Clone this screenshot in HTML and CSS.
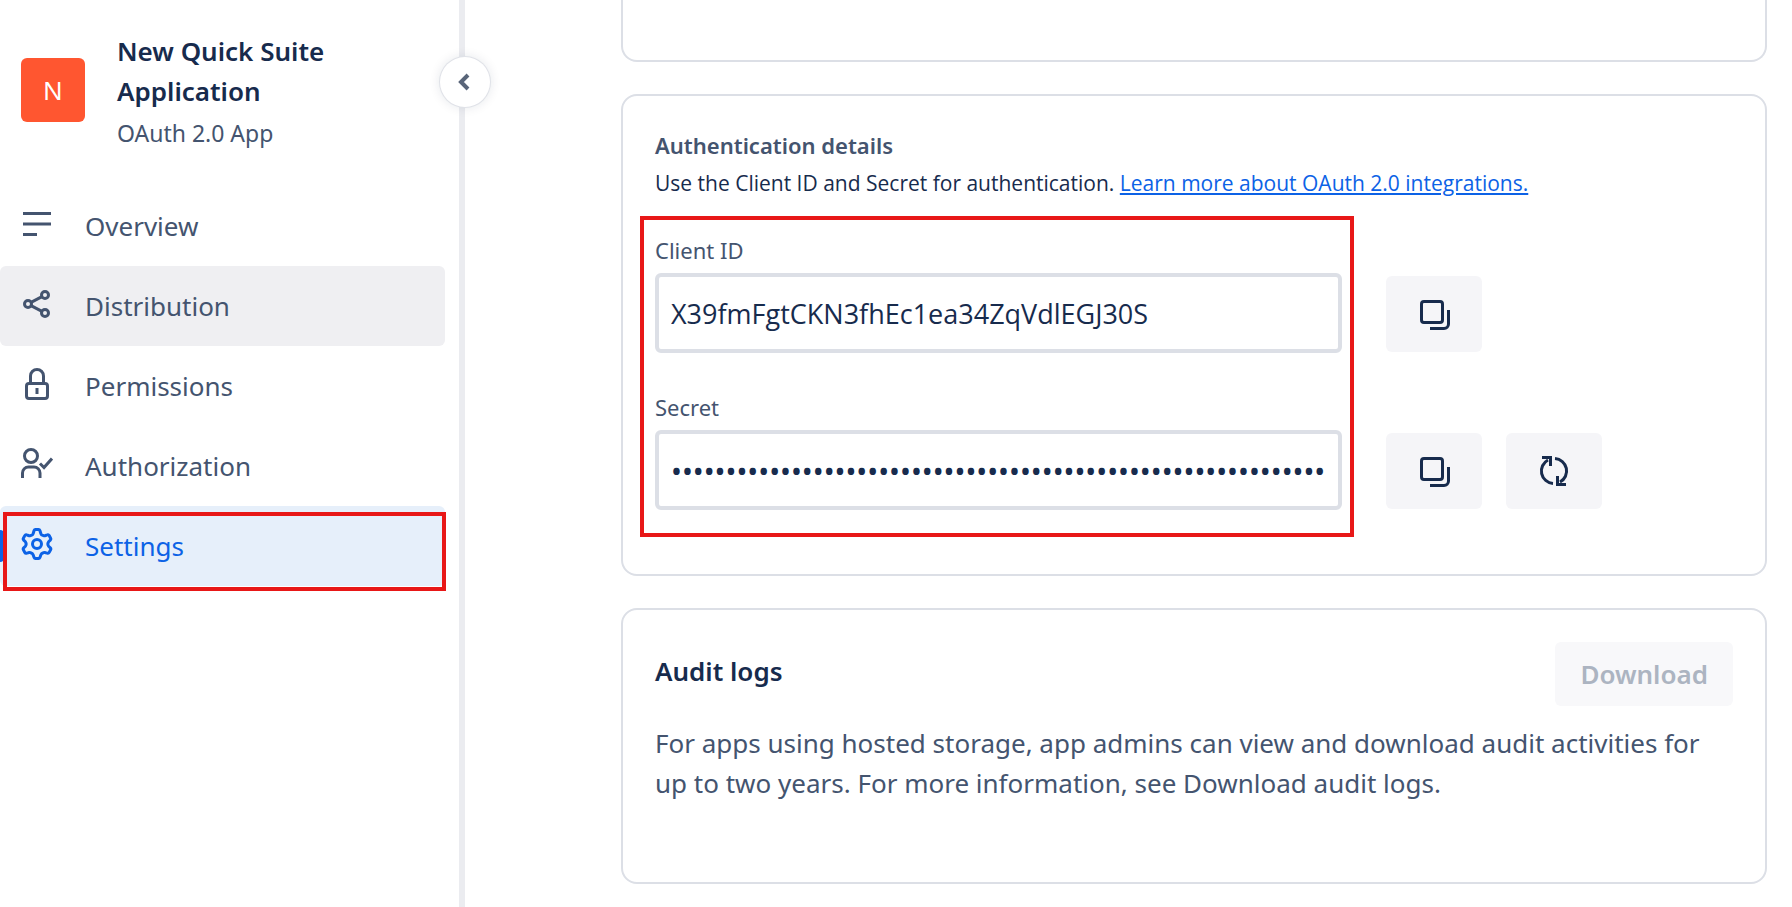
FILE: index.html
```html
<!DOCTYPE html>
<html lang="en">
<head>
    <meta charset="UTF-8">
    <meta name="viewport" content="width=device-width, initial-scale=1.0">
    <title>Settings - New Quick Suite Application</title>
    <link rel="stylesheet" href="styles.css">
</head>
<body>
    <aside class="sidebar">
        <div class="app-header">
            <div class="app-avatar">N</div>
            <div>
                <h1 class="app-name">New Quick Suite Application</h1>
                <p class="app-type">OAuth 2.0 App</p>
            </div>
        </div>

        <nav class="nav">
            <a href="#overview" class="nav-item">
                <svg class="nav-icon" viewBox="0 0 32 32"><path d="M2 5.500h28M2 16h28M2 26.500h14"/></svg>
                Overview
            </a>
            <a href="#distribution" class="nav-item hovered">
                <svg class="nav-icon" viewBox="0 0 32 32"><circle cx="7" cy="16" r="3.500"/><circle cx="24" cy="7" r="3.500"/><circle cx="24" cy="25" r="3.500"/><path d="M10 14.400l11-5.800M10 17.600l11 5.800"/></svg>
                Distribution
            </a>
            <a href="#permissions" class="nav-item">
                <svg class="nav-icon" viewBox="0 0 32 32"><rect x="5.500" y="15.500" width="21" height="15" rx="2.500"/><path d="M9.500 15V8a6.500 6.500 0 0 1 13 0v7M16 20v6"/></svg>
                Permissions
            </a>
            <a href="#authorization" class="nav-item">
                <svg class="nav-icon" viewBox="0 0 32 32"><circle cx="10" cy="8" r="6.500"/><path d="M1.500 30v-5a6 6 0 0 1 6-6h5.500a6 6 0 0 1 6 6v5M19 15.500l4 4 8-9"/></svg>
                Authorization
            </a>
            <a href="#settings" class="nav-item selected">
                <svg class="nav-icon" viewBox="0 0 32 32"><path stroke-linejoin="round" d="M14.500 1.500h3a1.500 1.500 0 0 1 1.400 1l1 3.200q.5 1.300 1.900 1.700l.8.300q1 .4 2-.2l1.600-.6a1.600 1.600 0 0 1 2 .7l1.400 2.600a1.600 1.600 0 0 1-.3 1.900l-1.700 1.700q-1.500 2.200 0 4.400l1.700 1.700a1.600 1.600 0 0 1 .3 1.900l-1.400 2.600a1.600 1.600 0 0 1-2 .7l-1.600-.4q-1-.4-2 0l-.8.300q-1.400.4-1.900 1.700l-1 2.800a1.500 1.500 0 0 1-1.400 1h-3a1.500 1.500 0 0 1-1.400-1l-1-2.800q-.5-1.300-1.900-1.700l-.8-.3q-1-.4-2 0l-1.600.4a1.600 1.600 0 0 1-2-.7l-1.400-2.600a1.600 1.600 0 0 1 .3-1.900l1.700-1.700q1.500-2.200 0-4.400l-1.700-1.700a1.600 1.600 0 0 1-.3-1.900l1.400-2.600a1.600 1.600 0 0 1 2-.7l1.600.6q1 .6 2 .2l.8-.3q1.400-.4 1.900-1.700l1-3.200a1.500 1.500 0 0 1 1.400-1z"/><circle cx="16" cy="16" r="4.500"/></svg>
                Settings
            </a>
        </nav>

        <button type="button" class="collapse-btn" aria-label="Collapse sidebar">
            <svg width="16" height="20" viewBox="0 0 16 20"><path d="M11 3L4 10l7 7"/></svg>
        </button>
    </aside>

    <main class="content">
        <section class="card card-previous"></section>

        <section class="card">
            <h2 class="section-title">Authentication details</h2>
            <p class="section-text">Use the Client ID and Secret for authentication. <a href="#oauth">Learn more about OAuth 2.0 integrations.</a></p>

            <div class="credentials">
                <div class="fields">
                    <label for="client-id">Client ID</label>
                    <input type="text" id="client-id" value="X39fmFgtCKN3fhEc1ea34ZqVdlEGJ30S" readonly>
                    <label for="secret">Secret</label>
                    <input type="password" id="secret" value="0123456789012345678901234567890123456789012345678901234567890123" readonly>
                </div>
                <div class="actions">
                    <div class="action-row">
                        <button type="button" class="icon-btn" aria-label="Copy client ID">
                            <svg width="32" height="32" viewBox="0 0 32 32"><rect x="3.500" y="3.500" width="21" height="21" rx="2.500"/><path d="M12 30.500h14a4.500 4.500 0 0 0 4.500-4.500V12"/></svg>
                        </button>
                    </div>
                    <div class="action-row">
                        <button type="button" class="icon-btn" aria-label="Copy secret">
                            <svg width="32" height="32" viewBox="0 0 32 32"><rect x="3.500" y="3.500" width="21" height="21" rx="2.500"/><path d="M12 30.500h14a4.500 4.500 0 0 0 4.500-4.500V12"/></svg>
                        </button>
                        <button type="button" class="icon-btn" aria-label="Rotate secret">
                            <svg width="32" height="32" viewBox="0 0 32 32"><path d="M15 28.500A12.500 12.500 0 0 1 10 5M17 3.500A12.500 12.500 0 0 1 22 27M4 2.500h8.500V11M28 29.500h-8.500V21"/></svg>
                        </button>
                    </div>
                </div>
            </div>
        </section>

        <section class="card card-audit">
            <div class="audit-header">
                <h2 class="audit-title">Audit logs</h2>
                <button type="button" class="download-btn" disabled>Download</button>
            </div>
            <p class="audit-text">For apps using hosted storage, app admins can view and download audit activities for up to two years. For more information, see Download audit logs.</p>
        </section>
    </main>
</body>
</html>
```
FILE: styles.css
```css
* {
    box-sizing: border-box;
}

body {
    display: flex;
    min-height: 100vh;
    margin: 0;
    font-family: "Noto Sans", "Open Sans", sans-serif;
    font-size: 26px;
    line-height: 40px;
    color: #44546f;
    background-color: #fff;
}

h1, h2, p {
    margin: 0;
}

/* Sidebar */
.sidebar {
    position: relative;
    flex: 0 0 465px;
    padding: 31px 14px 0 0;
    border-right: 6px solid #ebecf0;
}

.app-header {
    display: flex;
    align-items: flex-start;
    gap: 32px;
    padding: 0 60px 0 21px;
    margin-bottom: 31px;
}

.app-avatar {
    flex: 0 0 64px;
    height: 64px;
    margin-top: 27px;
    border-radius: 6px;
    background-color: #ff5630;
    color: #fff;
    line-height: 64px;
    text-align: center;
}

.app-name {
    font-size: 26px;
    font-weight: 600;
    color: #172b4d;
}

.app-type {
    font-size: 23px;
    line-height: 44px;
}

.nav-item {
    position: relative;
    display: flex;
    align-items: center;
    gap: 32px;
    height: 80px;
    padding-left: 21px;
    border-radius: 6px;
    color: #44546f;
    text-decoration: none;
}

.nav-item.hovered {
    background-color: #efeff2;
}

.nav-item.selected {
    background-color: #e6effa;
    color: #0c62e6;
}

.nav-item.selected::before {
    content: "";
    position: absolute;
    left: 0;
    top: 24px;
    width: 4px;
    height: 32px;
    border-radius: 0 4px 4px 0;
    background-color: #0c62e6;
}

/* Red frame over the selected item */
.nav-item.selected::after {
    content: "";
    position: absolute;
    inset: 6px -1px -5px 3px;
    border: 4px solid #e81717;
}

.nav-icon {
    width: 32px;
    height: 32px;
    margin-bottom: 4px;
}

svg {
    fill: none;
    stroke: currentColor;
    stroke-width: 3;
}

.collapse-btn {
    position: absolute;
    top: 57px;
    right: -31px;
    display: flex;
    align-items: center;
    justify-content: center;
    width: 50px;
    height: 50px;
    padding: 0;
    border: none;
    border-radius: 50%;
    background-color: #fff;
    color: #596579;
    box-shadow: 0 0 0 1px #e0e2e8, 0 0 12px rgba(9, 30, 66, 0.12);
}

.collapse-btn svg {
    stroke-width: 4;
}

/* Content */
.content {
    flex: 1;
    display: flex;
    flex-direction: column;
    gap: 32px;
    padding: 0 25px 23px 156px;
}

.card {
    padding: 29px 32px 37px;
    border: 2px solid #dcdfe6;
    border-radius: 16px;
}

.card-previous {
    border-top: none;
    border-radius: 0 0 16px 16px;
    padding: 30px;
}

.section-title {
    font-size: 22px;
    font-weight: 600;
}

.section-text {
    margin-bottom: 15px;
    font-family: "Open Sans", sans-serif;
    font-size: 21px;
    line-height: 36px;
    color: #172b4d;
}

.section-text a {
    color: #0c62e6;
}

.credentials {
    display: flex;
    gap: 32px;
    margin-left: -15px;
}

.fields {
    flex: 1;
    display: flex;
    flex-direction: column;
    padding: 10px 8px 23px 11px;
    border: 4px solid #e81717;
}

.fields label {
    padding-bottom: 3px;
    font-size: 22px;
}

.fields input {
    height: 80px;
    padding: 0 12px;
    border: 4px solid #dcdfe6;
    border-radius: 6px;
    background-color: #fff;
    color: #172b4d;
    font-family: "Open Sans", sans-serif;
    font-size: 27px;
}

.fields input[type="password"] {
    font-family: inherit;
    font-size: 29px;
}

.fields input + label {
    margin-top: 34px;
}

.actions {
    flex: 0 0 347px;
    display: flex;
    flex-direction: column;
    gap: 81px;
    padding-top: 60px;
}

.action-row {
    display: flex;
    gap: 24px;
}

.icon-btn {
    display: flex;
    align-items: center;
    justify-content: center;
    width: 96px;
    height: 76px;
    border: none;
    border-radius: 6px;
    background-color: #f5f5f8;
    color: #172b4d;
}

.card-audit {
    padding: 32px 32px 79px;
}

.audit-header {
    display: flex;
    align-items: flex-start;
    justify-content: space-between;
    margin-bottom: 17px;
}

.audit-title {
    padding-top: 9px;
    font-size: 26px;
    font-weight: 600;
    color: #172b4d;
}

.download-btn {
    height: 64px;
    padding: 0 25px;
    border: none;
    border-radius: 6px;
    background-color: #f8f8fa;
    color: #acb4c1;
    font-family: inherit;
    font-size: 26px;
    font-weight: 600;
}
```
